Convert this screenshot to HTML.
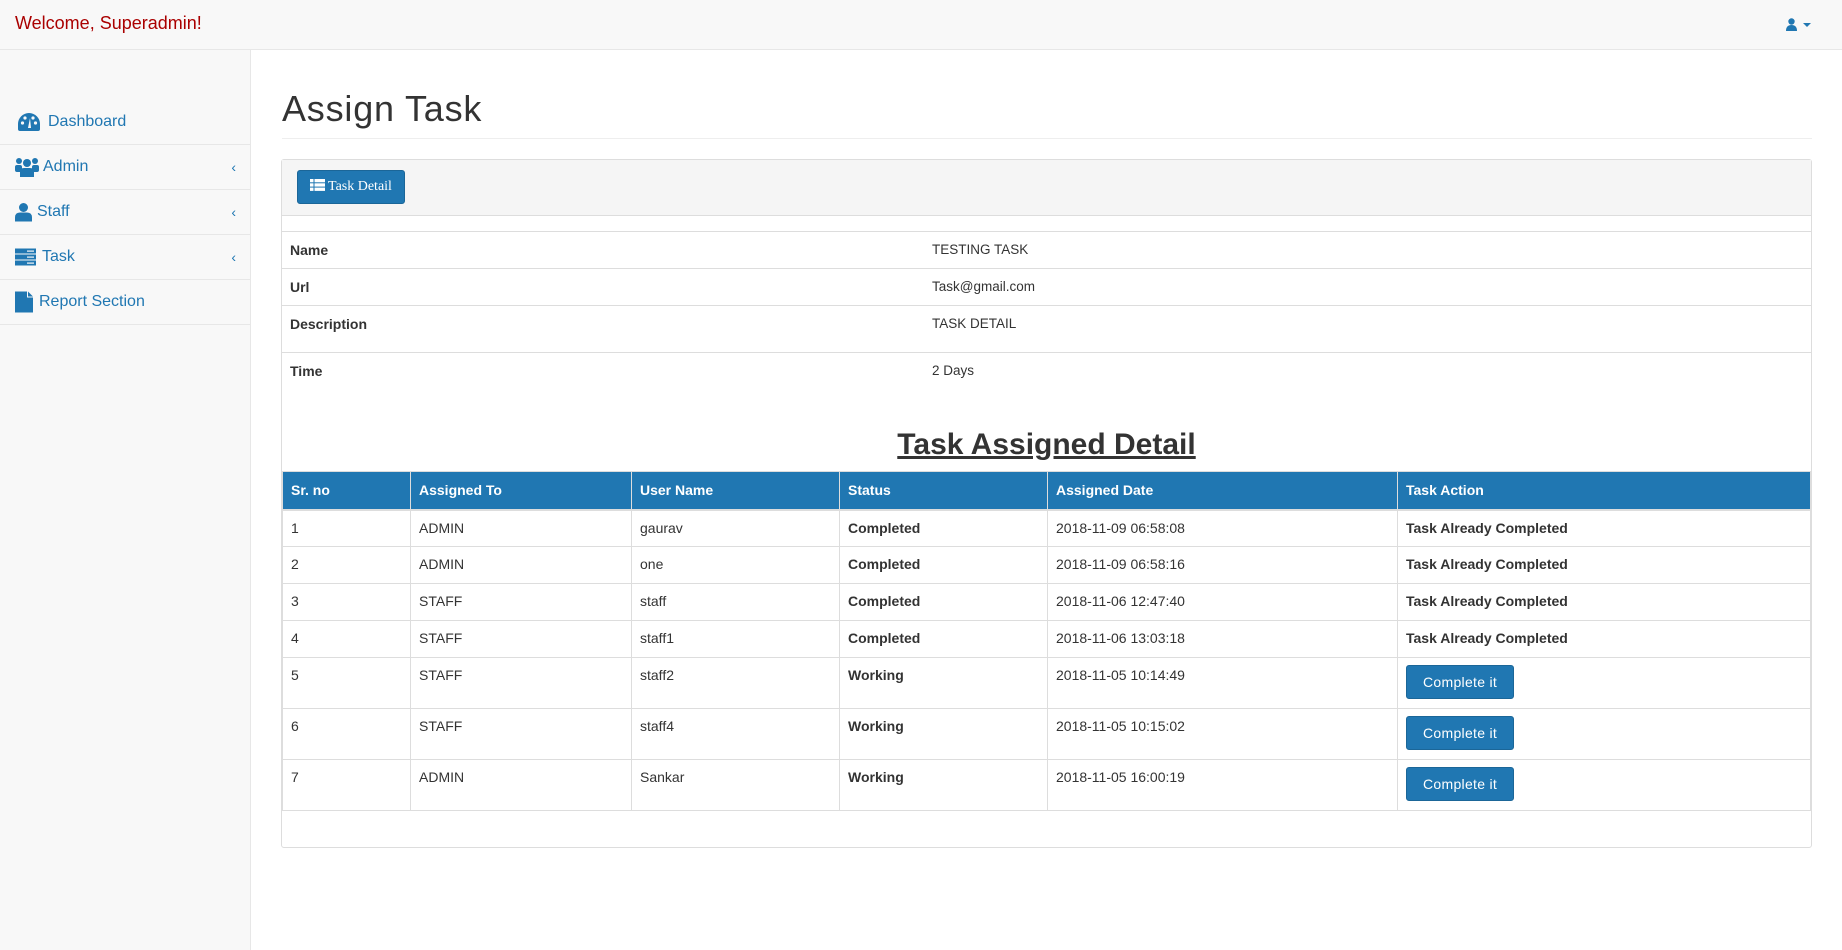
<!DOCTYPE html>
<html><head><style>
*{box-sizing:border-box;margin:0;padding:0}
body{width:1842px;height:950px;background:#fff;font-family:"Liberation Sans",sans-serif;font-size:14px;color:#333;position:relative;overflow:hidden}
.top{position:absolute;left:0;top:0;width:1842px;height:50px;background:#f8f8f8;border-bottom:1px solid #e7e7e7}
.top .w{position:absolute;left:15px;top:13px;font-size:18px;color:#a00}
.side{position:absolute;left:0;top:50px;width:251px;height:900px;background:#f8f8f8;border-right:1px solid #e7e7e7}
.it{position:absolute;left:0;width:250px;border-bottom:1px solid #e7e7e7;color:#2077b2;font-size:16px}
.it span{position:absolute;top:50%;transform:translateY(-50%)}
.it .ch{right:14px;font-size:14px}
.it svg{position:absolute;top:50%;transform:translateY(-50%)}
.title{position:absolute;left:282px;top:88px;font-size:36px;color:#333;letter-spacing:.8px}
.hr{position:absolute;left:282px;top:138px;width:1530px;border-top:1px solid #eee}
.panel{position:absolute;left:281px;top:159px;width:1531px;height:689px;border:1px solid #ddd;border-radius:3px}
.ph{height:56px;background:#f5f5f5;border-bottom:1px solid #ddd;position:relative}
.btn{position:absolute;left:15px;top:10px;width:108px;height:34px;background:#2077b2;border:1px solid #1b6698;border-radius:3px;color:#fff;font-family:"Liberation Serif",serif;font-size:14px;line-height:32px;padding-left:12px}
.r{position:absolute;left:0;width:1529px;border-top:1px solid #ddd}
.r b{position:absolute;left:8px;top:10px;font-size:14px}
.r i{position:absolute;left:650px;top:10px;font-style:normal;font-size:13.5px}
.h2{position:absolute;left:0;width:1529px;top:268px;text-align:center;font-size:30px;font-weight:bold;text-decoration:underline;color:#333}
table{position:absolute;left:0;top:311px;border-collapse:collapse;width:1529px}
td,th{border:1px solid #ddd;text-align:left;vertical-align:top;padding:9px 8px 0;font-size:14px}
th{background:#2077b2;color:#fff;height:38px;border-color:#ddd;border-bottom:2px solid #ddd;vertical-align:middle;padding-top:0}
td{height:37px}
tr.t td{height:51px}
.cb{display:inline-block;background:#2077b2;border:1px solid #1b6698;border-radius:3px;color:#fff;padding:0 16px;height:34px;line-height:32px;margin-top:-2px;font-size:14px;letter-spacing:.3px}
</style></head><body>
<div class="top"><div class="w">Welcome, Superadmin!</div>
<svg style="position:absolute;left:1786px;top:18px" width="28" height="14" viewBox="0 0 28 14"><circle cx="5.5" cy="3.5" r="3.2" fill="#2077b2"/><path d="M0 13 Q0 7 5.5 7 Q11 7 11 13Z" fill="#2077b2"/><path d="M17 5h8l-4 4z" fill="#2077b2"/></svg>
</div>
<div class="side">
<div class="it" style="top:50px;height:45px;border-bottom:1px solid #e7e7e7"><svg style="left:18px" width="22" height="18" viewBox="0 0 22 18"><path d="M11 0A11 11 0 0 0 0 11v5q0 2 2 2h18q2 0 2-2v-5A11 11 0 0 0 11 0z" fill="#2077b2"/><circle cx="4.5" cy="10" r="1.6" fill="#f8f8f8"/><circle cx="7" cy="5" r="1.6" fill="#f8f8f8"/><circle cx="15" cy="5" r="1.6" fill="#f8f8f8"/><circle cx="17.5" cy="10" r="1.6" fill="#f8f8f8"/><path d="M10 15l2-10 1 10z" fill="#f8f8f8"/></svg><span style="left:48px">Dashboard</span></div>
<div class="it" style="top:95px;height:45px"><svg style="left:15px" width="24" height="20" viewBox="0 0 24 20"><circle cx="4" cy="4" r="3" fill="#2077b2"/><circle cx="20" cy="4" r="3" fill="#2077b2"/><circle cx="12" cy="6" r="4" fill="#2077b2"/><rect x="0" y="8" width="7" height="7" rx="2" fill="#2077b2"/><rect x="17" y="8" width="7" height="7" rx="2" fill="#2077b2"/><path d="M5 20v-5q0-4 4-4h6q4 0 4 4v5z" fill="#2077b2"/></svg><span style="left:43px">Admin</span><span class="ch">&#8249;</span></div>
<div class="it" style="top:140px;height:45px"><svg style="left:15px" width="17" height="19" viewBox="0 0 17 19"><circle cx="8.5" cy="5" r="4.5" fill="#2077b2"/><path d="M0 19v-4q0-5 5-5h7q5 0 5 5v4z" fill="#2077b2"/></svg><span style="left:37px">Staff</span><span class="ch">&#8249;</span></div>
<div class="it" style="top:185px;height:45px"><svg style="left:15px" width="21" height="17" viewBox="0 0 21 17"><rect width="21" height="5" fill="#2077b2"/><rect y="6" width="21" height="5" fill="#2077b2"/><rect y="12" width="21" height="5" fill="#2077b2"/><rect x="12" y="2" width="7" height="1.2" fill="#f8f8f8"/><rect x="12" y="8" width="7" height="1.2" fill="#f8f8f8"/><rect x="12" y="14" width="7" height="1.2" fill="#f8f8f8"/></svg><span style="left:42px">Task</span><span class="ch">&#8249;</span></div>
<div class="it" style="top:230px;height:45px"><svg style="left:15px" width="18" height="21" viewBox="0 0 18 21"><path d="M0 0h12v6h6v15H0z M13 0l5 5h-5z" fill="#2077b2"/></svg><span style="left:39px">Report Section</span></div>
</div>
<div class="title">Assign Task</div>
<div class="hr"></div>
<div class="panel">
<div class="ph"><div class="btn"><svg width="15" height="12" viewBox="0 0 15 12" style="vertical-align:-1px;margin-right:3px"><rect width="3.5" height="3.3" fill="#fff"/><rect x="4.5" width="10.5" height="3.3" fill="#fff"/><rect y="4.3" width="3.5" height="3.3" fill="#fff"/><rect x="4.5" y="4.3" width="10.5" height="3.3" fill="#fff"/><rect y="8.6" width="3.5" height="3.3" fill="#fff"/><rect x="4.5" y="8.6" width="10.5" height="3.3" fill="#fff"/></svg>Task Detail</div></div>
<div class="r" style="top:71px;height:37px"><b>Name</b><i>TESTING TASK</i></div>
<div class="r" style="top:108px;height:37px"><b>Url</b><i>Task@gmail.com</i></div>
<div class="r" style="top:145px;height:47px"><b>Description</b><i>TASK DETAIL</i></div>
<div class="r" style="top:192px;height:47px"><b>Time</b><i>2 Days</i></div>
<div class="h2">Task Assigned Detail</div>
<table>
<tr><th style="width:128px">Sr. no</th><th style="width:221px">Assigned To</th><th style="width:208px">User Name</th><th style="width:208px">Status</th><th style="width:350px">Assigned Date</th><th>Task Action</th></tr>
<tr><td>1</td><td>ADMIN</td><td>gaurav</td><td><b>Completed</b></td><td>2018-11-09 06:58:08</td><td><b>Task Already Completed</b></td></tr>
<tr><td>2</td><td>ADMIN</td><td>one</td><td><b>Completed</b></td><td>2018-11-09 06:58:16</td><td><b>Task Already Completed</b></td></tr>
<tr><td>3</td><td>STAFF</td><td>staff</td><td><b>Completed</b></td><td>2018-11-06 12:47:40</td><td><b>Task Already Completed</b></td></tr>
<tr><td>4</td><td>STAFF</td><td>staff1</td><td><b>Completed</b></td><td>2018-11-06 13:03:18</td><td><b>Task Already Completed</b></td></tr>
<tr class="t"><td>5</td><td>STAFF</td><td>staff2</td><td><b>Working</b></td><td>2018-11-05 10:14:49</td><td><span class="cb">Complete it</span></td></tr>
<tr class="t"><td>6</td><td>STAFF</td><td>staff4</td><td><b>Working</b></td><td>2018-11-05 10:15:02</td><td><span class="cb">Complete it</span></td></tr>
<tr class="t"><td>7</td><td>ADMIN</td><td>Sankar</td><td><b>Working</b></td><td>2018-11-05 16:00:19</td><td><span class="cb">Complete it</span></td></tr>
</table>
</div>
</body></html>
